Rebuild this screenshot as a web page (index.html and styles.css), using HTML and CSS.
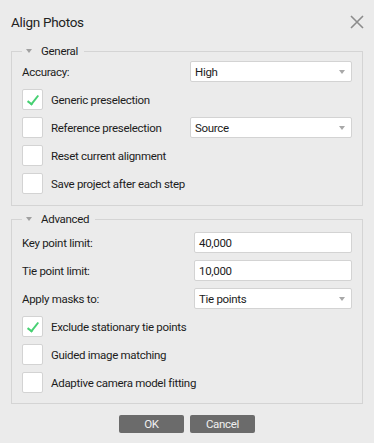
FILE: index.html
```html
<!doctype html>
<html>
    <head>
        <title>Align Photos</title>
        <link rel="stylesheet" href="styles.css">
    </head>
    <body>
        <header class="titlebar">
            <h1>Align Photos</h1>
            <button class="close" title="Close">
                <svg width="14" height="14" viewBox="0 0 14 14">
                    <path d="M1 1 L13 13 M13 1 L1 13" stroke="#8c8c8c" stroke-width="1.6" fill="none"/>
                </svg>
            </button>
        </header>

        <fieldset class="group general">
            <legend><span class="arrow"></span>General</legend>
            <div class="row">
                <span class="label">Accuracy:</span>
                <div class="combo">High<span class="caret"></span></div>
            </div>
            <div class="row">
                <label class="check"><span class="box checked"></span>Generic preselection</label>
            </div>
            <div class="row">
                <label class="check"><span class="box"></span>Reference preselection</label>
                <div class="combo">Source<span class="caret"></span></div>
            </div>
            <div class="row">
                <label class="check"><span class="box"></span>Reset current alignment</label>
            </div>
            <div class="row">
                <label class="check"><span class="box"></span>Save project after each step</label>
            </div>
        </fieldset>

        <fieldset class="group advanced">
            <legend><span class="arrow"></span>Advanced</legend>
            <div class="row">
                <span class="label">Key point limit:</span>
                <div class="field">40,000</div>
            </div>
            <div class="row">
                <span class="label">Tie point limit:</span>
                <div class="field">10,000</div>
            </div>
            <div class="row">
                <span class="label">Apply masks to:</span>
                <div class="combo">Tie points<span class="caret"></span></div>
            </div>
            <div class="row">
                <label class="check"><span class="box checked"></span>Exclude stationary tie points</label>
            </div>
            <div class="row">
                <label class="check"><span class="box"></span>Guided image matching</label>
            </div>
            <div class="row">
                <label class="check"><span class="box"></span>Adaptive camera model fitting</label>
            </div>
        </fieldset>

        <footer class="buttons">
            <button class="btn">OK</button>
            <button class="btn">Cancel</button>
        </footer>
    </body>
</html>
```

FILE: styles.css
```css
body {
    margin: 0;
    background: #ebebeb;
    font-family: Roboto, "Noto Sans", sans-serif;
    font-size: 11.5px;
    letter-spacing: -0.3px;
    color: #1c1c1c;
    width: 374px;
    height: 443px;
}

.titlebar {
    display: flex;
    justify-content: space-between;
    align-items: center;
    height: 44px;
    padding: 0 11px 0 11px;
}

.titlebar h1 {
    margin: 0;
    font-size: 13.5px;
    font-weight: normal;
    color: #222;
}

.close {
    background: none;
    border: none;
    padding: 0;
    margin-right: -1px;
    display: flex;
}

.group {
    margin: 0 11px;
    border: 1px solid #d4d4d4;
    padding: 3px 10px 11px 10px;
}

.advanced {
    margin-top: 6px;
    padding-top: 6px;
    padding-bottom: 10px;
}

.group legend {
    display: flex;
    align-items: center;
    height: 14px;
    line-height: 14px;
    padding: 0 6px 0 4px;
}

.arrow {
    width: 0;
    height: 0;
    border-left: 3.5px solid transparent;
    border-right: 3.5px solid transparent;
    border-top: 4px solid #a0a0a0;
    margin-right: 9px;
}

.row {
    display: flex;
    align-items: center;
    height: 21px;
    margin-bottom: 7px;
}

.row:last-child {
    margin-bottom: 0;
}

.label {
    width: 168px;
    flex: none;
}

.advanced .label {
    width: 172px;
}

.check {
    display: flex;
    align-items: center;
    flex: 1;
    white-space: nowrap;
}

.check:not(:last-child) {
    width: 168px;
    flex: none;
}

.box {
    width: 19px;
    height: 19px;
    background: white;
    border: 1px solid #d3d3d3;
    border-radius: 2px;
    margin-right: 8px;
    position: relative;
}

.box.checked::after {
    content: "";
    position: absolute;
    left: 7px;
    top: 3px;
    width: 4px;
    height: 10px;
    border-right: 2px solid #46d072;
    border-bottom: 2px solid #46d072;
    transform: rotate(38deg);
}

.combo,
.field {
    flex: 1;
    height: 19px;
    background: white;
    border: 1px solid #d3d3d3;
    border-radius: 2px;
    display: flex;
    align-items: center;
    padding-left: 4px;
    position: relative;
}

.caret {
    position: absolute;
    right: 6px;
    top: 8px;
    border-left: 3.5px solid transparent;
    border-right: 3.5px solid transparent;
    border-top: 4px solid #a8a8a8;
}

.buttons {
    display: flex;
    justify-content: center;
    gap: 6px;
    margin-top: 11px;
}

.btn {
    width: 65px;
    height: 18px;
    background: #6b6b6b;
    color: #f0f0f0;
    border: none;
    border-radius: 2px;
    font-family: Roboto, "Noto Sans", sans-serif;
    font-size: 11.5px;
    letter-spacing: -0.3px;
    padding: 0;
}
```
